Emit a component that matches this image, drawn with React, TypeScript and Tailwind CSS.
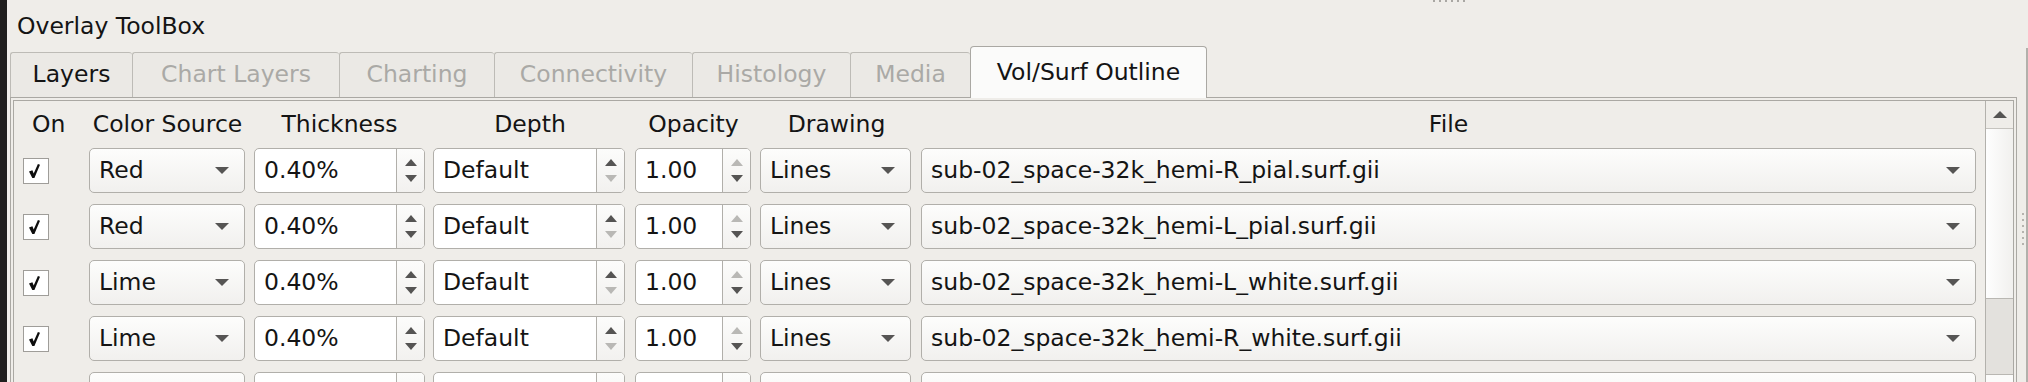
import React from 'react';

type Row = { on: boolean; color: string; thick: string; depth: string; opacity: string; drawing: string; file: string };

const rows: Row[] = [
  { on: true, color: 'Red', thick: '0.40%', depth: 'Default', opacity: '1.00', drawing: 'Lines', file: 'sub-02_space-32k_hemi-R_pial.surf.gii' },
  { on: true, color: 'Red', thick: '0.40%', depth: 'Default', opacity: '1.00', drawing: 'Lines', file: 'sub-02_space-32k_hemi-L_pial.surf.gii' },
  { on: true, color: 'Lime', thick: '0.40%', depth: 'Default', opacity: '1.00', drawing: 'Lines', file: 'sub-02_space-32k_hemi-L_white.surf.gii' },
  { on: true, color: 'Lime', thick: '0.40%', depth: 'Default', opacity: '1.00', drawing: 'Lines', file: 'sub-02_space-32k_hemi-R_white.surf.gii' },
  // only the top edge of this row is visible
  { on: false, color: '', thick: '', depth: '', opacity: '', drawing: '', file: '' },
];

const tabs = [
  { label: 'Layers', w: 'w-[122px]', state: 'normal' },
  { label: 'Chart Layers', w: 'w-[207px]', state: 'disabled' },
  { label: 'Charting', w: 'w-[155px]', state: 'disabled' },
  { label: 'Connectivity', w: 'w-[198px]', state: 'disabled' },
  { label: 'Histology', w: 'w-[158px]', state: 'disabled' },
  { label: 'Media', w: 'w-[120px]', state: 'disabled' },
  { label: 'Vol/Surf Outline', w: 'w-[237px]', state: 'selected' },
];

const Down = ({ className }: { className?: string }) => (
  <svg width="14" height="7" viewBox="0 0 14 7" className={className}>
    <path d="M0 0h14L7 7z" fill="currentColor" />
  </svg>
);

const Up = ({ className }: { className?: string }) => (
  <svg width="14" height="7" viewBox="0 0 14 7" className={className}>
    <path d="M0 7h14L7 0z" fill="currentColor" />
  </svg>
);

const SpinUp = ({ dim }: { dim?: boolean }) => (
  <svg width="12" height="7" viewBox="0 0 12 7" className={dim ? 'text-[#b9b8b5]' : 'text-[#555453]'}>
    <path d="M0 7h12L6 0z" fill="currentColor" />
  </svg>
);

const SpinDown = ({ dim }: { dim?: boolean }) => (
  <svg width="12" height="7" viewBox="0 0 12 7" className={dim ? 'text-[#b9b8b5]' : 'text-[#555453]'}>
    <path d="M0 0h12L6 7z" fill="currentColor" />
  </svg>
);

const Check = ({ on }: { on: boolean }) => (
  <div className="w-[26px] h-[26px] border border-[#9f9d99] bg-white flex items-center pl-[5px]">
    {on && (
      <svg width="11" height="14" viewBox="0 0 11 14">
        <path d="M0 7.6 L3.4 6.2 L4.7 9.4 L8.9 0 L11 0.7 L5.4 14 L3.3 14 Z" fill="#0d0d0d" />
      </svg>
    )}
  </div>
);

const Combo = ({ value, w }: { value: string; w: string }) => (
  <div className={`${w} h-[45px] flex items-center justify-between pl-[9px] pr-[15px] rounded-[5px] border border-[#b1afaa] bg-linear-to-b from-[#fdfdfc] to-[#f1f0ee]`}>
    <span className="whitespace-nowrap">{value}</span>
    <Down className="text-[#565554]" />
  </div>
);

const Spin = ({ value, w, upDim, downDim }: { value: string; w: string; upDim?: boolean; downDim?: boolean }) => (
  <div className={`${w} h-[45px] flex rounded-[5px] border border-[#b1afaa] bg-white overflow-hidden`}>
    <div className="flex-1 flex items-center pl-[9px] whitespace-nowrap">{value}</div>
    <div className="w-[28px] border-l border-[#b1afaa] bg-linear-to-b from-[#fcfcfb] to-[#f2f1ef] flex flex-col items-center justify-center gap-[9px]">
      <SpinUp dim={upDim} />
      <SpinDown dim={downDim} />
    </div>
  </div>
);

const cols = 'grid grid-cols-[58px_157px_171px_194px_117px_153px_1055px] gap-x-[8px]';

export default function App() {
  return (
    <div className="relative w-[2028px] h-[382px] overflow-hidden flex bg-[#efede9] text-[#141414] font-['DejaVu_Sans',sans-serif] text-[23.5px]">
      {/* window edge */}
      <div className="w-[7px] bg-[#1f1e1d]" />

      <div className="w-[2010px] pl-[3px] flex flex-col">
        <div className="h-[46px] pt-[6px] pl-[7px] leading-[40px] whitespace-nowrap">Overlay ToolBox</div>

        {/* tabs */}
        <div className="h-[51px] flex items-end">
          {tabs.map((t) =>
            t.state === 'selected' ? (
              <div
                key={t.label}
                className={`${t.w} relative z-10 h-[52px] -mb-px flex items-center justify-center rounded-t-[4px] border-l border-t border-r border-[#aaa8a3] bg-[#fbfbfa] whitespace-nowrap`}
              >
                {t.label}
              </div>
            ) : (
              <div
                key={t.label}
                className={`${t.w} h-[45px] flex items-center justify-center rounded-t-[3px] border-l border-t border-[#bdbbb6] bg-[#ebe9e5] whitespace-nowrap ${t.state === 'disabled' ? 'text-[#aaa9a6]' : ''}`}
              >
                {t.label}
              </div>
            )
          )}
        </div>

        {/* pane */}
        <div className="flex-1 border border-[#aaa8a3] p-[2px] flex">
          <div className="flex-1 border border-[#aaa8a3] flex">
            <div className="flex-1 pl-[9px] pt-[4px]">
              <div className={`${cols} h-[40px] items-center`}>
                <div className="pl-[9px]">On</div>
                <div className="text-center whitespace-nowrap">Color Source</div>
                <div className="text-center">Thickness</div>
                <div className="text-center">Depth</div>
                <div className="text-center">Opacity</div>
                <div className="text-center">Drawing</div>
                <div className="text-center">File</div>
              </div>
              <div className="mt-[3px] flex flex-col gap-[11px]">
                {rows.map((r, i) => (
                  <div key={i} className={`${cols} h-[45px] items-center`}>
                    <Check on={r.on} />
                    <Combo value={r.color} w="w-[156px]" />
                    <Spin value={r.thick} w="w-[171px]" />
                    <Spin value={r.depth} w="w-[192px]" downDim />
                    <Spin value={r.opacity} w="w-[116px]" upDim />
                    <Combo value={r.drawing} w="w-[151px]" />
                    <Combo value={r.file} w="w-[1055px]" />
                  </div>
                ))}
              </div>
            </div>

            {/* scrollbar */}
            <div className="w-[28px] border-l border-[#b3b1ac] flex flex-col">
              <div className="h-[28px] border-b border-[#c6c4bf] flex items-center justify-center">
                <Up className="text-[#555453]" />
              </div>
              <div className="h-[170px] border-b border-[#b9b7b2] bg-linear-to-r from-[#fefefe] to-[#f1f0ee]" />
              <div className="h-[75px] bg-[#e3e1dd]" />
              <div className="flex-1 border-t border-[#b9b7b2] bg-[#fbfbfa]" />
            </div>
          </div>
        </div>
      </div>

      {/* splitter gutter */}
      <div className="w-[11px] pt-[48px] pl-[9px] flex">
        <div className="w-[2px] bg-[#b2b0ab]" />
      </div>

      {/* splitter grips */}
      <div className="absolute top-0 left-[1433px] flex gap-[4px]">
        {[0, 1, 2, 3, 4, 5].map((d) => (
          <div key={d} className="w-[2px] h-[2px] bg-[#a9a7a3]" />
        ))}
      </div>
      <div className="absolute top-[213px] left-[2022px] flex flex-col gap-[4px]">
        {[0, 1, 2, 3, 4, 5].map((d) => (
          <div key={d} className="w-[2px] h-[2px] bg-[#b5b3ae]" />
        ))}
      </div>
    </div>
  );
}
